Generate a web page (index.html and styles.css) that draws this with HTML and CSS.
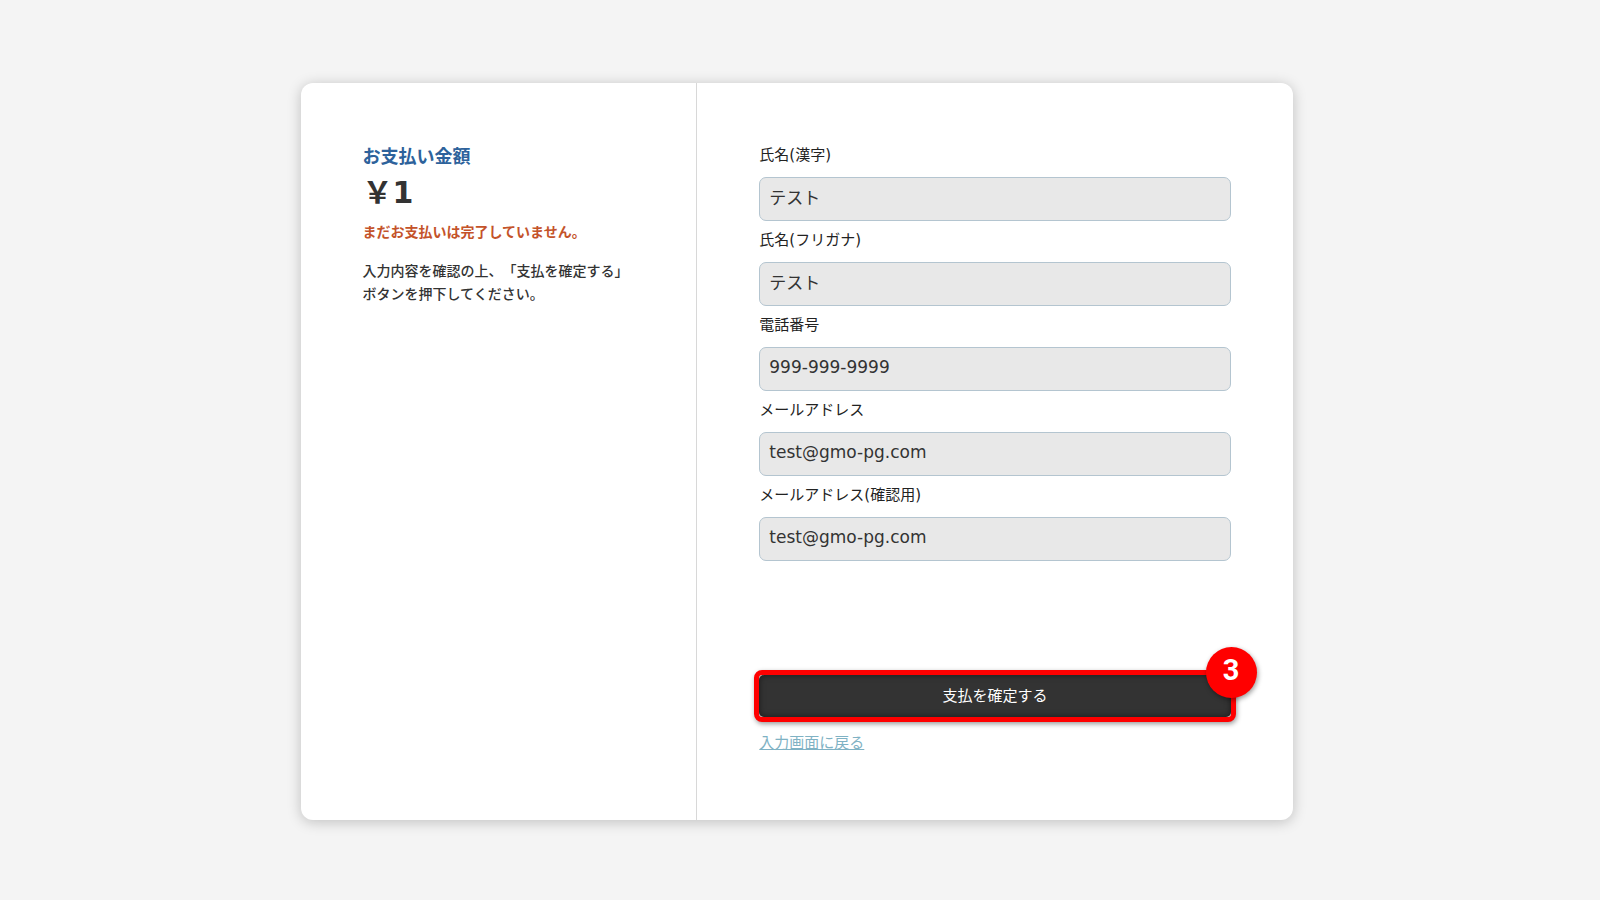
FILE: index.html
```
<!DOCTYPE html>
<html lang="ja">
<head>
    <meta charset="UTF-8">
    <meta name="viewport" content="width=device-width, initial-scale=1.0">
    <title>お支払い内容の確認</title>
    <link rel="stylesheet" href="styles.css">
</head>
<body>
    <main class="card">
        <section class="summary">
            <h1 class="summary-title">お支払い金額</h1>
            <p class="summary-price">￥1</p>
            <p class="summary-alert">まだお支払いは完了していません。</p>
            <p class="summary-text">入力内容を確認の上、「支払を確定する」<br>ボタンを押下してください。</p>
        </section>

        <form class="payment-form">
            <div class="field">
                <label for="name">氏名(漢字)</label>
                <input type="text" id="name" value="テスト" readonly>
            </div>
            <div class="field">
                <label for="kana">氏名(フリガナ)</label>
                <input type="text" id="kana" value="テスト" readonly>
            </div>
            <div class="field">
                <label for="tel">電話番号</label>
                <input type="tel" id="tel" value="999-999-9999" readonly>
            </div>
            <div class="field">
                <label for="email">メールアドレス</label>
                <input type="email" id="email" value="test@gmo-pg.com" readonly>
            </div>
            <div class="field">
                <label for="email-confirm">メールアドレス(確認用)</label>
                <input type="email" id="email-confirm" value="test@gmo-pg.com" readonly>
            </div>

            <div class="step-frame">
                <button type="button" class="submit-button">支払を確定する</button>
                <span class="step-badge">3</span>
            </div>
            <a href="#" class="back-link">入力画面に戻る</a>
        </form>
    </main>
</body>
</html>
```

FILE: styles.css
```
* {
    box-sizing: border-box;
}

body {
    background-color: #f4f4f4;
    color: #333;
    font-family: "Noto Sans CJK JP", sans-serif;
    font-size: 15px;
    line-height: 24px;
    margin: 0;
    padding: 83px 7px 80px 0;
    text-spacing-trim: space-all;
}

h1,
p {
    margin: 0;
}

.card {
    display: flex;
    width: 62vw;
    margin: 0 auto;
    background-color: #fff;
    border-radius: 12px;
    box-shadow: 0 2px 14px rgba(0, 0, 0, 0.22);
}

.summary {
    width: 40%;
    padding: 60px 0 66px 62px;
    border-right: 1px solid #d8d8d8;
}

.summary-title {
    color: #2d629b;
    font-size: 18px;
    font-weight: bold;
    line-height: 24px;
}

.summary-price {
    font-family: "DejaVu Sans", "Noto Sans CJK JP", sans-serif;
    font-size: 30px;
    font-weight: bold;
    line-height: 52px;
}

.summary-alert {
    color: #c4532a;
    font-size: 14px;
    font-weight: bold;
    margin-bottom: 16px;
}

.summary-text {
    font-size: 14px;
    font-weight: 500;
    line-height: 23px;
}

.payment-form {
    flex: 1;
    padding: 61px 62px 66px;
}

.field {
    margin-bottom: 8px;
}

.field label {
    display: block;
    margin-bottom: 11px;
    color: #222;
    font-family: "DejaVu Sans", "Noto Sans CJK JP", sans-serif;
    line-height: 22px;
}

.field input {
    display: block;
    width: 100%;
    height: 44px;
    padding: 0 9px 5px;
    background-color: #e8e8e8;
    border: 1px solid #b4c5d0;
    border-radius: 7px;
    color: #333;
    font-family: "DejaVu Sans", "Noto Sans CJK JP", sans-serif;
    font-size: 17px;
}

.step-frame {
    position: relative;
    margin: 109px -5px 8px;
    border: 5px solid #f00;
    border-radius: 8px;
    background-color: #ccc;
    box-shadow: 1px 2px 5px rgba(0, 0, 0, 0.4);
}

.submit-button {
    display: block;
    width: 100%;
    height: 42px;
    padding: 0 0 4px;
    background-color: #333;
    border: none;
    border-radius: 5px;
    box-shadow: inset 0 0 6px rgba(0, 0, 0, 0.5);
    color: #fff;
    font-family: inherit;
    font-size: 15px;
    cursor: pointer;
}

.step-badge {
    position: absolute;
    top: -28px;
    right: -26px;
    width: 51px;
    height: 51px;
    background-color: #f00;
    border-radius: 50%;
    box-shadow: 1px 2px 5px rgba(0, 0, 0, 0.4);
    color: #fff;
    font-family: Roboto, sans-serif;
    font-size: 29px;
    font-weight: bold;
    line-height: 46px;
    text-align: center;
}

.back-link {
    color: #7fb2c4;
}
```
